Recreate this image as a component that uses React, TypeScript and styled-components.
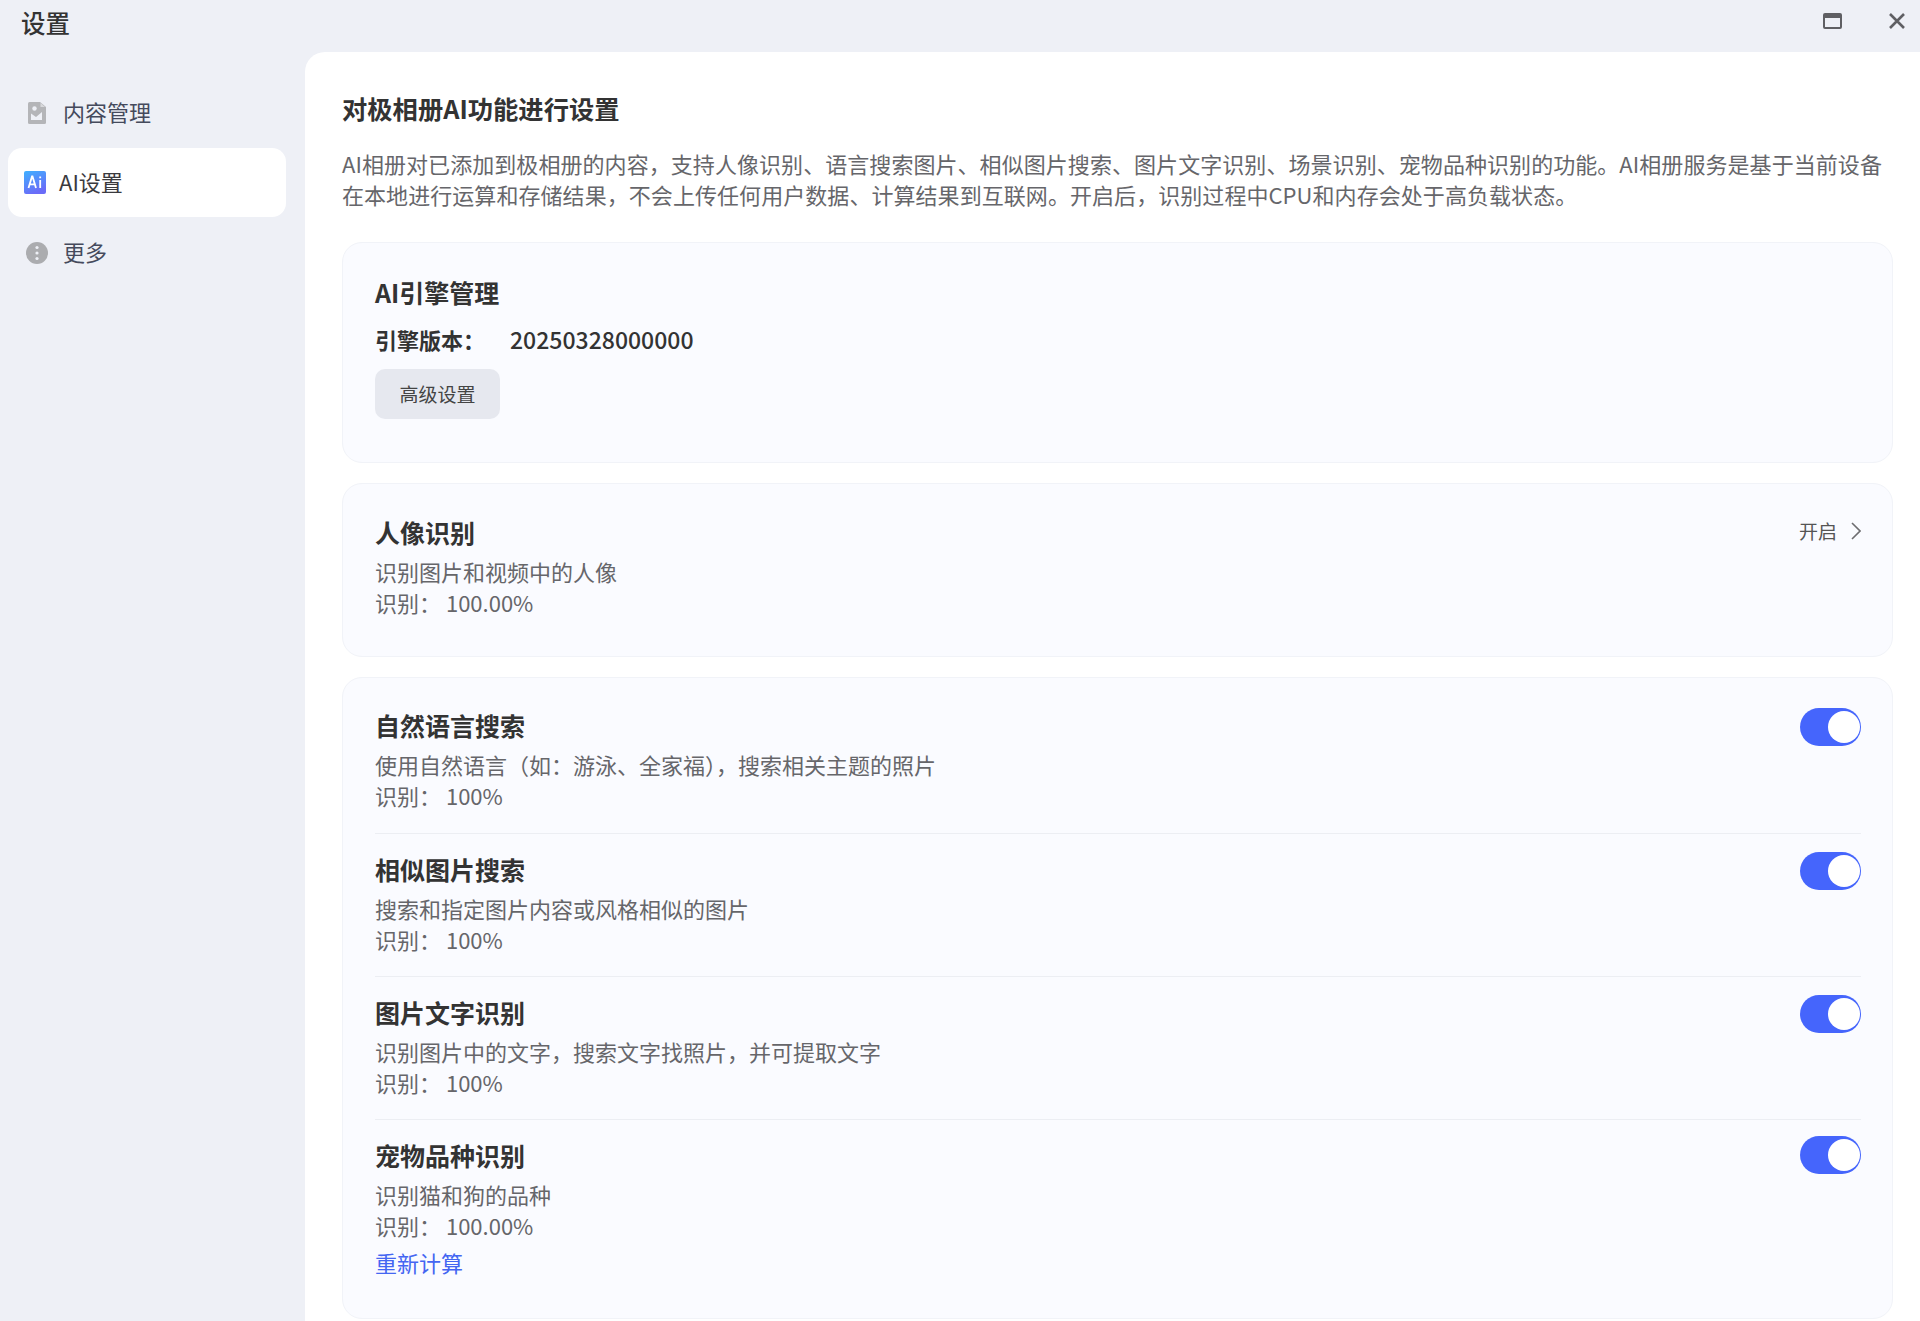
import styled, { createGlobalStyle } from "styled-components";
import { ReactNode } from "react";

const GlobalStyle = createGlobalStyle`
  html, body {
    margin: 0;
    padding: 0;
    height: 1321px;
    overflow: hidden;
    background: #eef0f6;
    font-family: "Noto Sans CJK SC", "Noto Sans", sans-serif;
  }
  * { box-sizing: border-box; }
`;

const Window = styled.div`
  width: 1920px;
  height: 1321px;
  display: flex;
  flex-direction: column;
  background: #eef0f6;
  overflow: hidden;
`;

const TitleBar = styled.header`
  height: 52px;
  flex: none;
  display: flex;
  align-items: flex-start;
  justify-content: space-between;
  padding: 6px 0 0 21px;
`;

const WindowTitle = styled.h1`
  margin: 0;
  font-size: 24.5px;
  line-height: 34px;
  font-weight: 500;
  color: #333;
`;

const WindowControls = styled.div`
  display: flex;
  align-items: center;
  gap: 46px;
  padding: 6px 14px 0 0;
  color: #5f5f63;
`;

const Body = styled.div`
  flex: 1;
  min-height: 0;
  display: flex;
`;

const Sidebar = styled.nav`
  width: 305px;
  flex: none;
  display: flex;
  flex-direction: column;
  gap: 1px;
  padding: 26px 19px 0 8px;
`;

const NavItem = styled.div<{ $active?: boolean }>`
  height: 69px;
  display: flex;
  align-items: center;
  gap: ${({ $active }) => ($active ? "13px" : "15px")};
  padding-left: ${({ $active }) => ($active ? "16px" : "18px")};
  border-radius: 14px;
  background: ${({ $active }) => ($active ? "#fff" : "transparent")};
  font-size: 22px;
  color: ${({ $active }) => ($active ? "#3a3a3e" : "#454a5c")};
`;

const NavLabel = styled.span`
  padding-bottom: 4px;
`;

const Main = styled.main`
  flex: 1;
  min-width: 0;
  background: #fff;
  border-top-left-radius: 20px;
  padding: 36px 27px 0 37px;
`;

const PageTitle = styled.h2`
  margin: 0;
  font-size: 25.300px;
  line-height: 40px;
  font-weight: 700;
  color: #333;
`;

const PageIntro = styled.p`
  margin: 20px 0 0;
  font-size: 22px;
  line-height: 31px;
  letter-spacing: 0.06px;
  color: #66666a;
`;

const Card = styled.section<{ $gap?: number }>`
  margin-top: ${({ $gap }) => $gap ?? 20}px;
  background: #fafbff;
  border: 1px solid #f1f3f8;
  border-radius: 20px;
  padding: 0 31px 0 32px;
`;

const EngineCard = styled(Card)`
  height: 221px;
  padding-top: 29px;
`;

const CardTitle = styled.h3`
  margin: 0;
  font-size: 25px;
  line-height: 40px;
  font-weight: 700;
  color: #333;
`;

const VersionRow = styled.div`
  display: flex;
  align-items: baseline;
  margin-top: 12px;
  font-size: 22px;
  line-height: 30px;
  font-weight: 700;
  color: #333;
`;

const VersionLabel = styled.span`
  width: 135px;
`;

const VersionValue = styled.span`
  font-size: 23px;
  font-weight: 500;
`;

const PlainButton = styled.button`
  display: block;
  margin-top: 15px;
  width: 125px;
  height: 50px;
  padding: 0 0 2px;
  border: 0;
  border-radius: 10px;
  background: #e6e8ef;
  color: #444;
  font: inherit;
  font-size: 19px;
`;

const Row = styled.div<{ $height: number; $top: number; $divider?: boolean }>`
  height: ${({ $height }) => $height}px;
  display: flex;
  justify-content: space-between;
  align-items: flex-start;
  padding-top: ${({ $top }) => $top}px;
  border-bottom: ${({ $divider }) => ($divider ? "1px solid #eceef3" : "0")};
`;

const RowTitle = styled.div`
  font-size: 25px;
  line-height: 48px;
  font-weight: 700;
  color: #333;
`;

const RowLine = styled.div`
  font-size: 22px;
  line-height: 31px;
  color: #66666a;
`;

const RecalcLink = styled.a`
  display: block;
  margin-top: 5px;
  font-size: 22px;
  line-height: 32px;
  color: #4466f2;
`;

const OpenLink = styled.div`
  display: flex;
  align-items: center;
  gap: 14px;
  margin: 8px 0 0;
  font-size: 19px;
  line-height: 30px;
  color: #555;
`;

const Toggle = styled.div<{ $offset: number }>`
  width: 61px;
  height: 38px;
  flex: none;
  margin-top: ${({ $offset }) => $offset}px;
  display: flex;
  justify-content: flex-end;
  align-items: center;
  padding-right: 1px;
  border-radius: 19px;
  background: #4565fc;
`;

const ToggleKnob = styled.span`
  width: 32px;
  height: 32px;
  border-radius: 50%;
  background: #fff;
`;

const DocIcon = () => (
  <svg width="22" height="22" viewBox="0 0 22 22">
    <path
      fill="#b4b5b8"
      d="M3.500 0H14l6 5v15.500a1.500 1.500 0 0 1-1.500 1.500h-15A1.500 1.500 0 0 1 2 20.500v-19A1.500 1.500 0 0 1 3.500 0z"
    />
    <circle cx="8.500" cy="6.500" r="2.200" fill="#eef0f6" />
    <path fill="#eef0f6" d="M5 11.500l5 3.500 6-5v8H5z" />
    <path fill="#d8d9dc" d="M14.500 1v4h4.500z" />
  </svg>
);

const AiIcon = () => (
  <svg width="22" height="23" viewBox="0 0 22 23">
    <defs>
      <linearGradient id="ai-icon-fill" x1="0" y1="0" x2="0.4" y2="1">
        <stop offset="0" stopColor="#3fb0ff" />
        <stop offset="1" stopColor="#6a6cf8" />
      </linearGradient>
    </defs>
    <rect width="22" height="23" rx="2" fill="url(#ai-icon-fill)" />
    <path
      fill="none"
      stroke="#fff"
      strokeWidth="1.800"
      d="M4.500 17L8 5.500h.5L12 17M5.600 13.300h5.300M16.200 9v8M16.200 5.400v1.900"
    />
  </svg>
);

const MoreIcon = () => (
  <svg width="22" height="22" viewBox="0 0 22 22">
    <circle cx="11" cy="11" r="11" fill="#abacaf" />
    <circle cx="11" cy="5.500" r="1.600" fill="#eef0f6" />
    <circle cx="11" cy="11" r="1.600" fill="#eef0f6" />
    <circle cx="11" cy="16.500" r="1.600" fill="#eef0f6" />
  </svg>
);

const MaximizeIcon = () => (
  <svg width="19" height="16" viewBox="0 0 19 16">
    <rect x="1" y="1" width="17" height="14" rx="1" fill="none" stroke="currentColor" strokeWidth="2" />
    <rect x="1" y="1" width="17" height="4" fill="currentColor" />
  </svg>
);

const CloseIcon = () => (
  <svg width="18" height="18" viewBox="0 0 18 18">
    <path d="M2 2l14 14M16 2L2 16" stroke="currentColor" strokeWidth="2.600" fill="none" />
  </svg>
);

const ChevronIcon = () => (
  <svg width="10" height="18" viewBox="0 0 10 18">
    <path d="M1 1l8 8-8 8" stroke="#6d6d70" strokeWidth="1.600" fill="none" />
  </svg>
);

type ToggleRowProps = {
  title: string;
  desc: string;
  progress: string;
  height: number;
  top: number;
  toggleOffset: number;
  divider?: boolean;
  children?: ReactNode;
};

const ToggleRow = ({ title, desc, progress, height, top, toggleOffset, divider, children }: ToggleRowProps) => (
  <Row $height={height} $top={top} $divider={divider}>
    <div>
      <RowTitle>{title}</RowTitle>
      <RowLine>{desc}</RowLine>
      <RowLine>识别： {progress}</RowLine>
      {children}
    </div>
    <Toggle $offset={toggleOffset}>
      <ToggleKnob />
    </Toggle>
  </Row>
);

const App = () => (
  <Window>
    <GlobalStyle />
    <TitleBar>
      <WindowTitle>设置</WindowTitle>
      <WindowControls>
        <MaximizeIcon />
        <CloseIcon />
      </WindowControls>
    </TitleBar>
    <Body>
      <Sidebar>
        <NavItem>
          <DocIcon />
          <NavLabel>内容管理</NavLabel>
        </NavItem>
        <NavItem $active>
          <AiIcon />
          <NavLabel>AI设置</NavLabel>
        </NavItem>
        <NavItem>
          <MoreIcon />
          <NavLabel>更多</NavLabel>
        </NavItem>
      </Sidebar>
      <Main>
        <PageTitle>对极相册AI功能进行设置</PageTitle>
        <PageIntro>
          AI相册对已添加到极相册的内容，支持人像识别、语言搜索图片、相似图片搜索、图片文字识别、场景识别、宠物品种识别的功能。AI相册服务是基于当前设备在本地进行运算和存储结果，不会上传任何用户数据、计算结果到互联网。开启后，识别过程中CPU和内存会处于高负载状态。
        </PageIntro>
        <EngineCard $gap={32}>
          <CardTitle>AI引擎管理</CardTitle>
          <VersionRow>
            <VersionLabel>引擎版本：</VersionLabel>
            <VersionValue>20250328000000</VersionValue>
          </VersionRow>
          <PlainButton>高级设置</PlainButton>
        </EngineCard>
        <Card>
          <Row $height={172} $top={24}>
            <div>
              <RowTitle>人像识别</RowTitle>
              <RowLine>识别图片和视频中的人像</RowLine>
              <RowLine>识别： 100.00%</RowLine>
            </div>
            <OpenLink>
              开启
              <ChevronIcon />
            </OpenLink>
          </Row>
        </Card>
        <Card>
          <ToggleRow
            title="自然语言搜索"
            desc="使用自然语言（如：游泳、全家福），搜索相关主题的照片"
            progress="100%"
            height={156}
            top={23}
            toggleOffset={7}
            divider
          />
          <ToggleRow
            title="相似图片搜索"
            desc="搜索和指定图片内容或风格相似的图片"
            progress="100%"
            height={143}
            top={11}
            toggleOffset={7}
            divider
          />
          <ToggleRow
            title="图片文字识别"
            desc="识别图片中的文字，搜索文字找照片，并可提取文字"
            progress="100%"
            height={143}
            top={11}
            toggleOffset={7}
            divider
          />
          <ToggleRow
            title="宠物品种识别"
            desc="识别猫和狗的品种"
            progress="100.00%"
            height={198}
            top={11}
            toggleOffset={5}
          >
            <RecalcLink>重新计算</RecalcLink>
          </ToggleRow>
        </Card>
      </Main>
    </Body>
  </Window>
);

export default App;
